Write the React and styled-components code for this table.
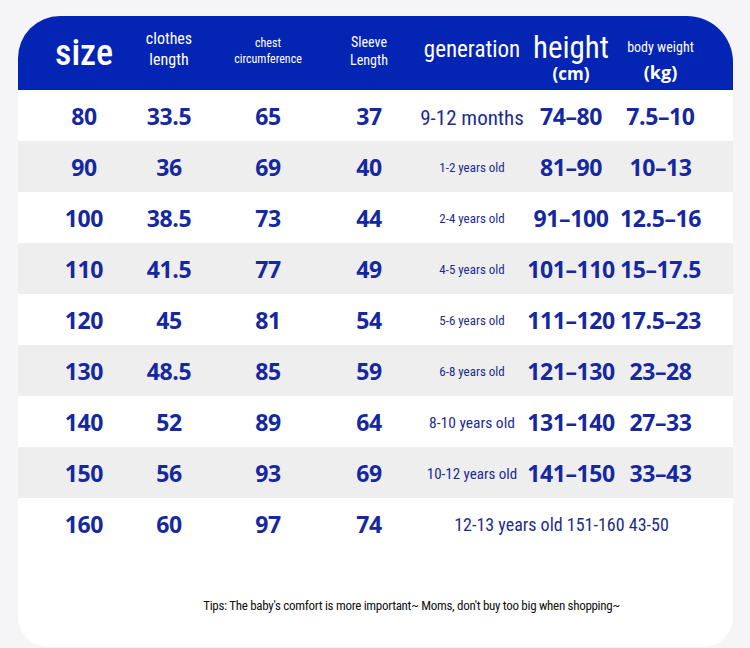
import React from 'react';
import styled, { createGlobalStyle } from 'styled-components';

const GlobalStyle = createGlobalStyle`
  html, body {
    margin: 0;
    padding: 0;
    background: #f5f5f7;
  }
`;

const narrow = `"Roboto Condensed", "Liberation Sans Narrow", "DejaVu Sans Condensed", sans-serif`;
const bold = `"Open Sans", "Noto Sans", sans-serif`;

const Page = styled.div`
  width: 750px;
  height: 648px;
  padding: 16px 0 0 18px;
  box-sizing: border-box;
  overflow: hidden;
`;

const Card = styled.div`
  width: 715px;
  height: 631px;
  background: #ffffff;
  border-radius: 42px 46px 30px 30px;
  overflow: hidden;
  display: flex;
  flex-direction: column;
`;

const Grid = styled.div`
  display: grid;
  grid-template-columns: 84px 86px 112px 90px 116px 82px 97px;
  padding-left: 24px;
  align-items: center;
  justify-items: center;
  text-align: center;
`;

const Header = styled(Grid)`
  height: 74px;
  background: #0424b4;
  color: #ffffff;
  font-family: ${narrow};
`;

const HeadCell = styled.div`
  font-size: ${p => p.size}px;
  font-weight: ${p => p.weight || 400};
  line-height: ${p => p.lh || 1.3};
  margin-top: ${p => p.mt || 0}px;
  white-space: nowrap;
`;

const Unit = styled.div`
  font-family: ${bold};
  font-weight: 700;
  font-size: ${p => p.size}px;
  line-height: 1;
  margin-top: ${p => p.mt || 0}px;
`;

const Row = styled(Grid)`
  height: 51px;
  background: ${p => (p.shade ? '#eeeeee' : '#ffffff')};
  color: #1628a0;
`;

const Num = styled.div`
  font-family: ${bold};
  font-weight: 700;
  font-size: 23px;
  letter-spacing: -0.4px;
  white-space: nowrap;
`;

const Gen = styled.div`
  font-family: ${narrow};
  font-size: ${p => p.size}px;
  color: #1d2c8e;
  margin-top: ${p => p.mt || 0}px;
  white-space: nowrap;
`;

const Merged = styled.div`
  grid-column: 5 / 8;
  font-family: ${narrow};
  font-size: 18px;
  color: #1f2d88;
  margin-top: 2px;
  white-space: nowrap;
`;

const Tips = styled.div`
  margin-top: 49px;
  padding-left: 72px;
  text-align: center;
  font-family: ${narrow};
  font-size: 13px;
  letter-spacing: -0.3px;
  color: #111111;
`;

const rows = [
  ['80', '33.5', '65', '37', '9-12 months', '74–80', '7.5–10', 21, 4],
  ['90', '36', '69', '40', '1-2 years old', '81–90', '10–13', 13, 2],
  ['100', '38.5', '73', '44', '2-4 years old', '91–100', '12.5–16', 13, 2],
  ['110', '41.5', '77', '49', '4-5 years old', '101–110', '15–17.5', 13, 2],
  ['120', '45', '81', '54', '5-6 years old', '111–120', '17.5–23', 13, 2],
  ['130', '48.5', '85', '59', '6-8 years old', '121–130', '23–28', 13, 2],
  ['140', '52', '89', '64', '8-10 years old', '131–140', '27–33', 15.5, 2],
  ['150', '56', '93', '69', '10-12 years old', '141–150', '33–43', 15, 2],
];

export default function App() {
  return (
    <Page>
      <GlobalStyle />
      <Card>
        <Header>
          <HeadCell size={36} weight={500} lh={1}>size</HeadCell>
          <HeadCell size={16} mt={-6}>clothes<br />length</HeadCell>
          <HeadCell size={12} mt={-2}>chest<br />circumference</HeadCell>
          <HeadCell size={14} mt={-4}>Sleeve<br />Length</HeadCell>
          <HeadCell size={23} mt={-6}>generation</HeadCell>
          <HeadCell size={31} lh={1} mt={8}>
            height
            <Unit size={17} mt={2}>(cm)</Unit>
          </HeadCell>
          <HeadCell size={14} lh={1} mt={14}>
            body weight
            <Unit size={18} mt={9}>(kg)</Unit>
          </HeadCell>
        </Header>
        {rows.map((r, i) => (
          <Row key={r[0]} shade={i % 2 === 1}>
            <Num>{r[0]}</Num>
            <Num>{r[1]}</Num>
            <Num>{r[2]}</Num>
            <Num>{r[3]}</Num>
            <Gen size={r[7]} mt={r[8]}>{r[4]}</Gen>
            <Num>{r[5]}</Num>
            <Num>{r[6]}</Num>
          </Row>
        ))}
        <Row>
          <Num>160</Num>
          <Num>60</Num>
          <Num>97</Num>
          <Num>74</Num>
          <Merged>12-13 years old 151-160 43-50</Merged>
        </Row>
        <Tips>Tips: The baby's comfort is more important~ Moms, don't buy too big when shopping~</Tips>
      </Card>
    </Page>
  );
}
